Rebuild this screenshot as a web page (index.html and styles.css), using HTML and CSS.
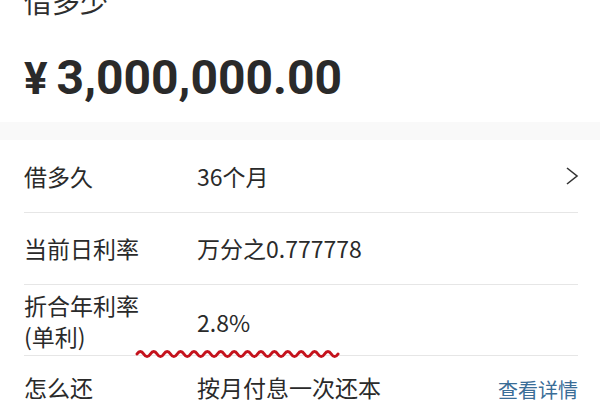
FILE: index.html
```html
<!DOCTYPE html>
<html lang="zh-CN">
<head>
<meta charset="utf-8">
<title>借多少</title>
<link rel="stylesheet" href="styles.css">
</head>
<body>
<div class="page">
  <div class="head">
    <div class="title">借多少</div>
    <div class="amount"><span class="yen">¥</span><span class="num">3,000,000.00</span></div>
  </div>
  <div class="band"></div>
  <div class="list">
    <div class="row row1">
      <div class="label">借多久</div>
      <div class="value">36个月</div>
      <svg class="chev" width="14" height="20" viewBox="0 0 14 20"><polyline points="2,2 12,10 2,18" fill="none" stroke="#333" stroke-width="1.6" stroke-linejoin="miter"/></svg>
    </div>
    <div class="row row2">
      <div class="label">当前日利率</div>
      <div class="value">万分之0.777778</div>
    </div>
    <div class="row row3">
      <div class="label two">折合年利率<br>(单利)</div>
      <div class="value">2.8%</div>
      <svg class="wave" width="206" height="12" viewBox="0 0 206 12"><path d="M3 6 q3.35 -5.2 6.7 0 t6.7 0 t6.7 0 t6.7 0 t6.7 0 t6.7 0 t6.7 0 t6.7 0 t6.7 0 t6.7 0 t6.7 0 t6.7 0 t6.7 0 t6.7 0 t6.7 0 t6.7 0 t6.7 0 t6.7 0 t6.7 0 t6.7 0 t6.7 0 t6.7 0 t6.7 0 t6.7 0 t6.7 0 t6.7 0 t6.7 0 t6.7 0 t6.7 0 t6.7 0" fill="none" stroke="#c4121c" stroke-width="3" stroke-linecap="round"/></svg>
    </div>
    <div class="row row4">
      <div class="label">怎么还</div>
      <div class="value">按月付息一次还本</div>
      <div class="link">查看详情</div>
    </div>
  </div>
</div>
</body>
</html>
```
FILE: styles.css
```css
html, body {
  margin: 0;
  padding: 0;
  background: #ffffff;
}
body {
  width: 600px;
  height: 400px;
  overflow: hidden;
  font-family: "Noto Sans CJK SC", "Noto Sans", sans-serif;
  color: #2a2a2a;
}
.page {
  display: flex;
  flex-direction: column;
}
.head {
  padding: 0 24px;
  height: 122px;
}
.title {
  font-size: 28px;
  line-height: 34px;
  margin-top: -16px;
  color: #2e2e2e;
}
.amount {
  display: flex;
  align-items: baseline;
  margin-top: 30px;
  font-family: Roboto, "Liberation Sans", sans-serif;
  font-weight: 700;
  font-size: 48px;
  line-height: 60px;
  color: #2a2a2a;
}
.yen {
  font-size: 44px;
  margin-right: 9px;
}
.band {
  height: 18px;
  background: #f9f9f9;
}
.list {
  margin: 0 22px 0 24px;
}
.row {
  display: flex;
  align-items: center;
  border-bottom: 1px solid #e6e6e6;
  font-size: 23px;
  position: relative;
}
.row1 { height: 72px; }
.row2 { height: 71px; }
.row3 { height: 70px; }
.row4 { height: 70px; border-bottom: none; align-items: flex-start; padding-top: 16px; box-sizing: border-box; }
.label {
  width: 173px;
  flex: none;
  line-height: 31px;
}
.row3 .label { padding-top: 2px; }
.value {
  flex: 1;
  line-height: 31px;
}
.row3 .value { padding-top: 4px; }
.chev {
  flex: none;
  margin-right: -1px;
}
.link {
  color: #3a6d97;
  font-size: 20px;
  line-height: 31px;
  padding-top: 2px;
}
.wave {
  position: absolute;
  left: 110px;
  top: 63px;
}
```
